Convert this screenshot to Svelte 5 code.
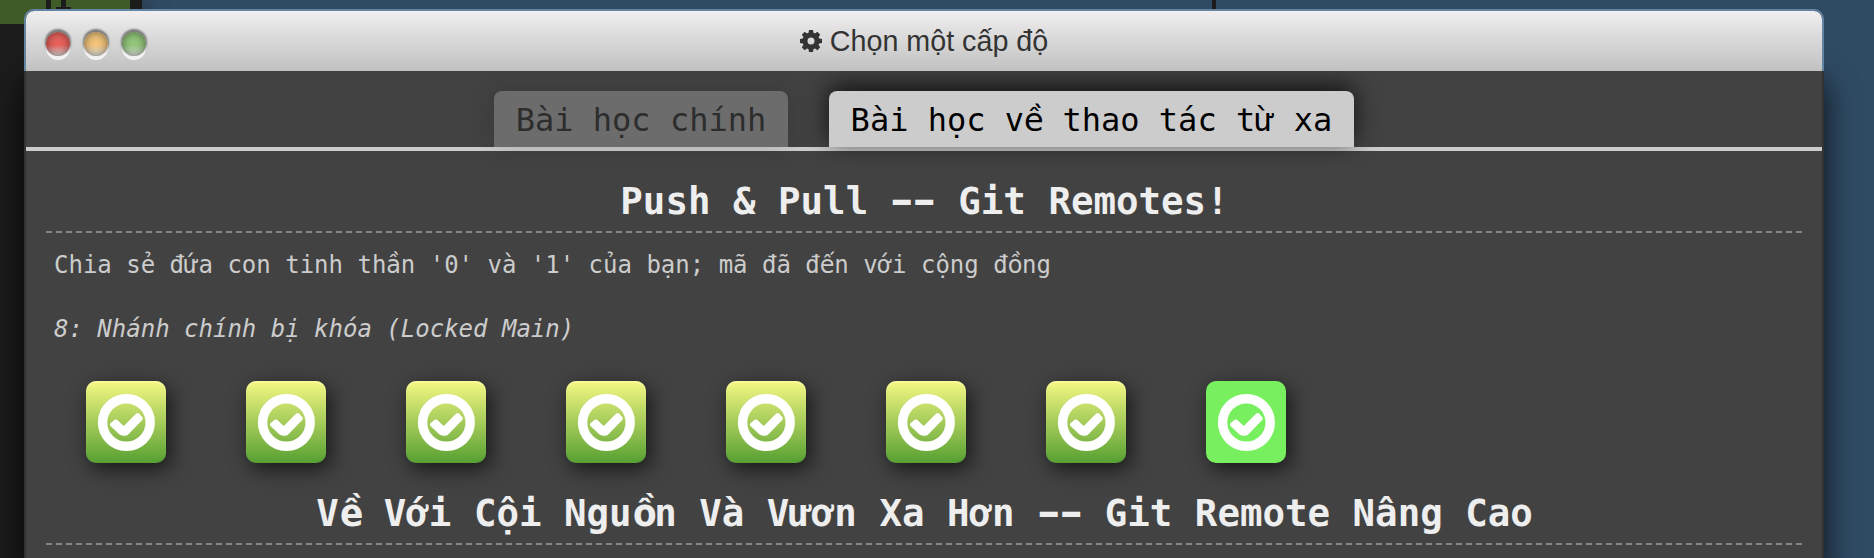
<script>
  const tabs = [
    { label: 'Bài học chính', active: false },
    { label: 'Bài học về thao tác từ xa', active: true }
  ];
  const levels = [1, 2, 3, 4, 5, 6, 7, 8];
  const current = 8;
  const teeth = [0, 45, 90, 135, 180, 225, 270, 315];

  // Vowels with two stacked marks and double hyphens get their own cell.
  const pieces = (text) => text.split(/([ềồầế]| --)/).filter(Boolean);
  const kind = (piece) => (piece === ' --' ? 'dash' : /^[ềồầế]$/.test(piece) ? 'stacked' : '');
</script>

{#snippet mono(text)}{#each pieces(text) as piece}{#if kind(piece)}<span class={kind(piece)}>{piece}</span>{:else}{piece}{/if}{/each}{/snippet}

<div class="desktop">
  <div class="terminal"><div class="banner"><i class="g1"></i><i class="g2"></i><i class="g3"></i></div></div>
  <div class="divider"></div>

  <div class="window">
    <header>
      <div class="lights">
        <span class="light red"></span>
        <span class="light amber"></span>
        <span class="light green"></span>
      </div>
      <div class="title">
        <svg class="gear" viewBox="-11 -11 22 22" width="22" height="22">
          {#each teeth as angle}
            <path d="M-2.7 -7 L-2 -11 H2 L2.7 -7 Z" transform="rotate({angle})" />
          {/each}
          <circle r="6" fill="none" stroke="#333" stroke-width="5" />
        </svg>
        <span>Chọn một cấp độ</span>
      </div>
    </header>

    <div class="body">
      <nav>
        {#each tabs as tab}
          <div class="tab" class:active={tab.active}>{@render mono(tab.label)}</div>
        {/each}
      </nav>

      <section>
        <h3>{@render mono('Push & Pull -- Git Remotes!')}</h3>
        <p>{@render mono("Chia sẻ đứa con tinh thần '0' và '1' của bạn; mã đã đến với cộng đồng")}</p>
        <p class="name">8: Nhánh chính bị khóa (Locked Main)</p>
        <div class="levels">
          {#each levels as level}
            <div class="level" class:current={level === current}>
              <svg viewBox="0 0 80 82" width="80" height="82">
                <circle cx="40.4" cy="41.5" r="23.8" fill="none" stroke="#fff" stroke-width="9.4" />
                <path d="M24.4 42.2 L29 38.6 Q30.2 38 31.3 39 L37.7 45 L50.2 32.6 Q51.5 31.3 53 32.6 L56.4 36.2 Q57.5 37.7 56.2 39 L42.5 53.2 Q40.8 55 38 54.8 Q35 55 33 53 L24.5 44.9 Q23.2 43.5 24.4 42.2 Z" fill="#fff" />
              </svg>
            </div>
          {/each}
        </div>
      </section>

      <section>
        <h3>{@render mono('Về Với Cội Nguồn Và Vươn Xa Hơn -- Git Remote Nâng Cao')}</h3>
      </section>
    </div>
  </div>
</div>

<style>
  :global(body) { margin: 0; overflow: hidden; }
  .desktop {
    position: relative;
    box-sizing: border-box;
    width: 1874px;
    height: 558px;
    padding: 9px 50px 0 24px;
    overflow: hidden;
    background: #2f4b64;
    font-family: "DejaVu Sans Mono", monospace;
  }
  .terminal {
    position: absolute;
    inset: 0 auto 0 0;
    width: 142px;
    background: #1c1c1c;
    box-shadow: 0 0 20px rgba(28, 28, 28, 0.6);
  }
  .banner { position: relative; width: 130px; height: 24px; background: #3f5c28; }
  .banner i { position: absolute; background: #1c1c1c; }
  .g1 { left: 46px; top: 0; width: 5px; height: 9px; }
  .g2 { left: 61px; top: 0; width: 5px; height: 9px; }
  .g3 { left: 56px; top: 7px; width: 15px; height: 2px; }
  .divider { position: absolute; left: 1212px; top: 0; width: 4px; height: 10px; background: #1c1c1c; }

  .window { position: relative; width: 1800px; }
  header {
    position: relative;
    z-index: 1;
    box-sizing: border-box;
    display: grid;
    grid-template-columns: 1fr auto 1fr;
    align-items: center;
    height: 62px;
    border: 2px solid #6484a4;
    border-bottom: 0;
    border-radius: 10px 10px 0 0;
    background: linear-gradient(#f0eeef, #c1c1c1) padding-box;
  }
  .lights { display: flex; gap: 14px; padding-left: 20px; }
  .light {
    width: 24px;
    height: 24px;
    margin-top: 6px;
    border-radius: 50%;
    box-shadow: 0 -2px 2px 1px rgba(0, 0, 0, 0.45), 0 4px 0 #f4f4f4, inset 0 0 8px rgba(0, 0, 0, 0.5);
  }
  .red { background: linear-gradient(#e8625d 0 55%, #e0d0d0 95%); }
  .amber { background: linear-gradient(#f2c47c 0 55%, #e6e2d8 95%); }
  .green { background: linear-gradient(#93c67b 0 55%, #d6e0d2 95%); }
  .title {
    display: flex;
    align-items: center;
    gap: 8px;
    height: 60px;
    color: #333;
    font: 28.7px/60px "Liberation Sans", Arial, sans-serif;
    white-space: nowrap;
  }
  .gear { display: block; fill: #333; margin-top: -1px; }

  .body {
    box-sizing: border-box;
    height: 500px;
    border: 2px solid #333;
    border-width: 0 2px;
    background: #424242;
    box-shadow: 0 10px 30px rgba(0, 0, 0, 0.8);
  }
  nav {
    display: flex;
    justify-content: center;
    gap: 40.4px;
    height: 56px;
    padding: 20px 0 0;
    border-bottom: 4px solid #cbcccb;
  }
  .tab {
    box-sizing: border-box;
    height: 56px;
    padding: 0 22px;
    border-radius: 8px 8px 0 0;
    background: #6c6c6c;
    color: #2d2d2d;
    font-size: 32px;
    line-height: 58px;
    white-space: pre;
    box-shadow: 0 0 24px rgba(0, 0, 0, 0.15);
  }
  .tab.active { background: #ccc; color: #000; box-shadow: 0 -5px 24px rgba(0, 0, 0, 0.75); }

  .stacked {
    display: inline-block;
    width: 0.602em;
    line-height: 1;
    text-align: center;
    font-family: "DejaVu Sans", sans-serif;
  }
  h3 .stacked { transform: scaleX(0.92); }
  .dash {
    display: inline-block;
    width: 1.164em;
    margin-right: 0.642em;
    line-height: 1;
    text-align: left;
    word-spacing: -0.107em;
    letter-spacing: -0.214em;
    transform: translateY(-1px) scaleX(1.55);
    transform-origin: left;
  }

  section { padding: 0 20px; }
  h3 {
    margin: 0;
    height: 80px;
    padding-left: 1px;
    border-bottom: 2px dashed #858585;
    color: #eee;
    font-size: 37.44px;
    line-height: 100px;
    text-align: center;
    white-space: pre;
  }
  p { margin: 0; padding: 0 8px; height: 64px; color: #ccc; font-size: 24px; line-height: 64px; }
  .name { font-style: italic; }
  .levels { display: flex; gap: 80px; padding: 20px 40px 0; height: 82px; }
  .level {
    width: 80px;
    height: 82px;
    border-radius: 10px;
    background: linear-gradient(#f5f883, #56a032);
    box-shadow: 4px 6px 20px rgba(0, 0, 0, 0.65), inset 0 2px 1px rgba(255, 255, 190, 0.4);
  }
  .level.current { background: #78ef5f; box-shadow: 4px 6px 20px rgba(0, 0, 0, 0.65); }
  .level svg { display: block; }
</style>
